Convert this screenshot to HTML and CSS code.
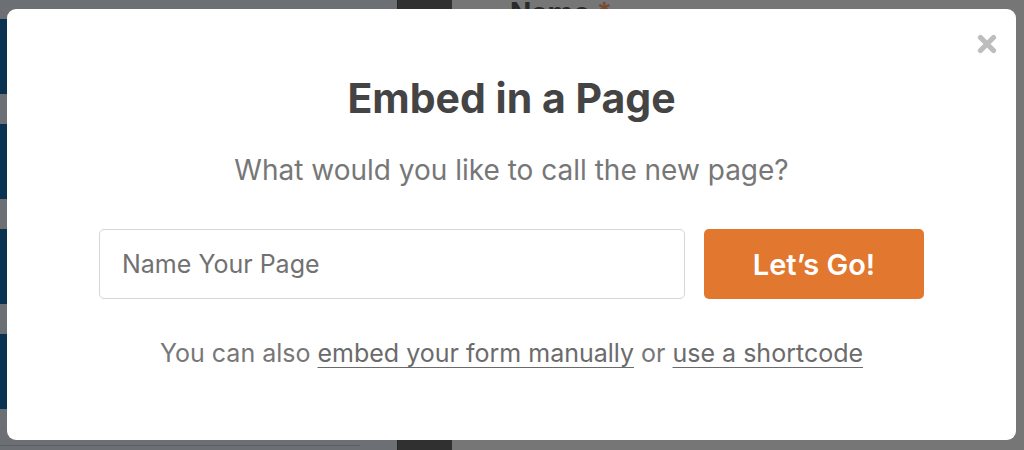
FILE: index.html
```html
<!DOCTYPE html>
<html lang="en">
<head>
<meta charset="utf-8">
<title>Embed in a Page</title>
<link rel="stylesheet" href="styles.css">
</head>
<body>
<div class="builder">
  <aside class="fields">
    <div class="field-block"></div>
    <div class="field-block"></div>
    <div class="field-block"></div>
    <div class="field-block"></div>
    <div class="fields-foot"></div>
  </aside>
  <div class="toolbar-col"></div>
  <main class="preview">
    <div class="preview-label">Name <span class="req">*</span></div>
  </main>
</div>

<div class="modal" role="dialog" aria-labelledby="embed-title">
  <button class="close" type="button" aria-label="Close">
    <svg viewBox="0 0 20 20" width="20" height="20" aria-hidden="true">
      <path d="M3.5 3.5 L16.5 16.5 M16.5 3.5 L3.5 16.5" stroke="#bdbdbd" stroke-width="5.2" stroke-linecap="round" fill="none"/>
    </svg>
  </button>
  <h1 id="embed-title" class="title">Embed in a Page</h1>
  <p class="subtitle">What would you like to call the new page?</p>
  <div class="form-row">
    <input class="page-name" type="text" placeholder="Name Your Page">
    <button class="go" type="button">Let’s Go!</button>
  </div>
  <p class="alt">You can also <a href="#">embed your form manually</a> or <a href="#">use a shortcode</a></p>
</div>
</body>
</html>
```

FILE: styles.css
```css
html, body {
  margin: 0;
  padding: 0;
  width: 1024px;
  height: 450px;
  overflow: hidden;
  font-family: "Inter", "Roboto", "Liberation Sans", sans-serif;
}

.builder {
  display: flex;
  height: 450px;
  background: #767676;
}

.fields {
  width: 397px;
  background: #6c6f73;
  padding-top: 19px;
  display: flex;
  flex-direction: column;
  gap: 30px;
  box-sizing: border-box;
}

.field-block {
  height: 75px;
  background: #0b3150;
  border-right: 1px solid #5a5e63;
}

.fields-foot {
  margin-top: auto;
  height: 4px;
  margin-right: 37px;
  border-top: 1px solid #5b5e62;
}

.toolbar-col {
  width: 54px;
  background: #303030;
  border-left: 1px solid #262626;
}

.preview {
  flex: 1;
}

.preview-label {
  margin: 0 0 0 58px;
  padding-top: 0;
  font-size: 28px;
  font-weight: 700;
  line-height: 26px;
  color: #2a2a2a;
}

.req {
  color: #7a4a30;
}

.modal {
  position: absolute;
  left: 7px;
  top: 9px;
  width: 1009px;
  height: 431px;
  background: #ffffff;
  border-radius: 9px;
  display: flex;
  flex-direction: column;
  align-items: center;
  box-sizing: border-box;
  padding-top: 65px;
}

.close {
  position: absolute;
  top: 25px;
  left: 970px;
  padding: 0;
  border: 0;
  background: none;
  width: 20px;
  height: 20px;
  line-height: 0;
}

.title {
  margin: 0;
  font-size: 41px;
  line-height: 48px;
  font-weight: 700;
  color: #444444;
}

.subtitle {
  margin: 31px 0 0;
  font-size: 28px;
  line-height: 34px;
  color: #777777;
}

.form-row {
  display: flex;
  gap: 19px;
  margin-top: 42px;
  width: 825px;
}

.page-name {
  width: 586px;
  height: 70px;
  box-sizing: border-box;
  border: 1.5px solid #d6d6d6;
  border-radius: 5px;
  padding: 0 22px;
  font-family: inherit;
  font-size: 25px;
  color: #444;
  background: #fff;
}

.page-name::placeholder {
  color: #717171;
}

.go {
  width: 220px;
  height: 70px;
  border: 0;
  border-radius: 5px;
  background: #e27730;
  color: #ffffff;
  font-family: inherit;
  font-size: 29px;
  font-weight: 600;
}

.alt {
  margin: 39px 0 0;
  font-size: 25px;
  line-height: 30px;
  color: #777777;
}

.alt a {
  color: #6b6b6b;
  text-decoration: underline;
  text-underline-offset: 5px;
  text-decoration-thickness: 1px;
}
```
